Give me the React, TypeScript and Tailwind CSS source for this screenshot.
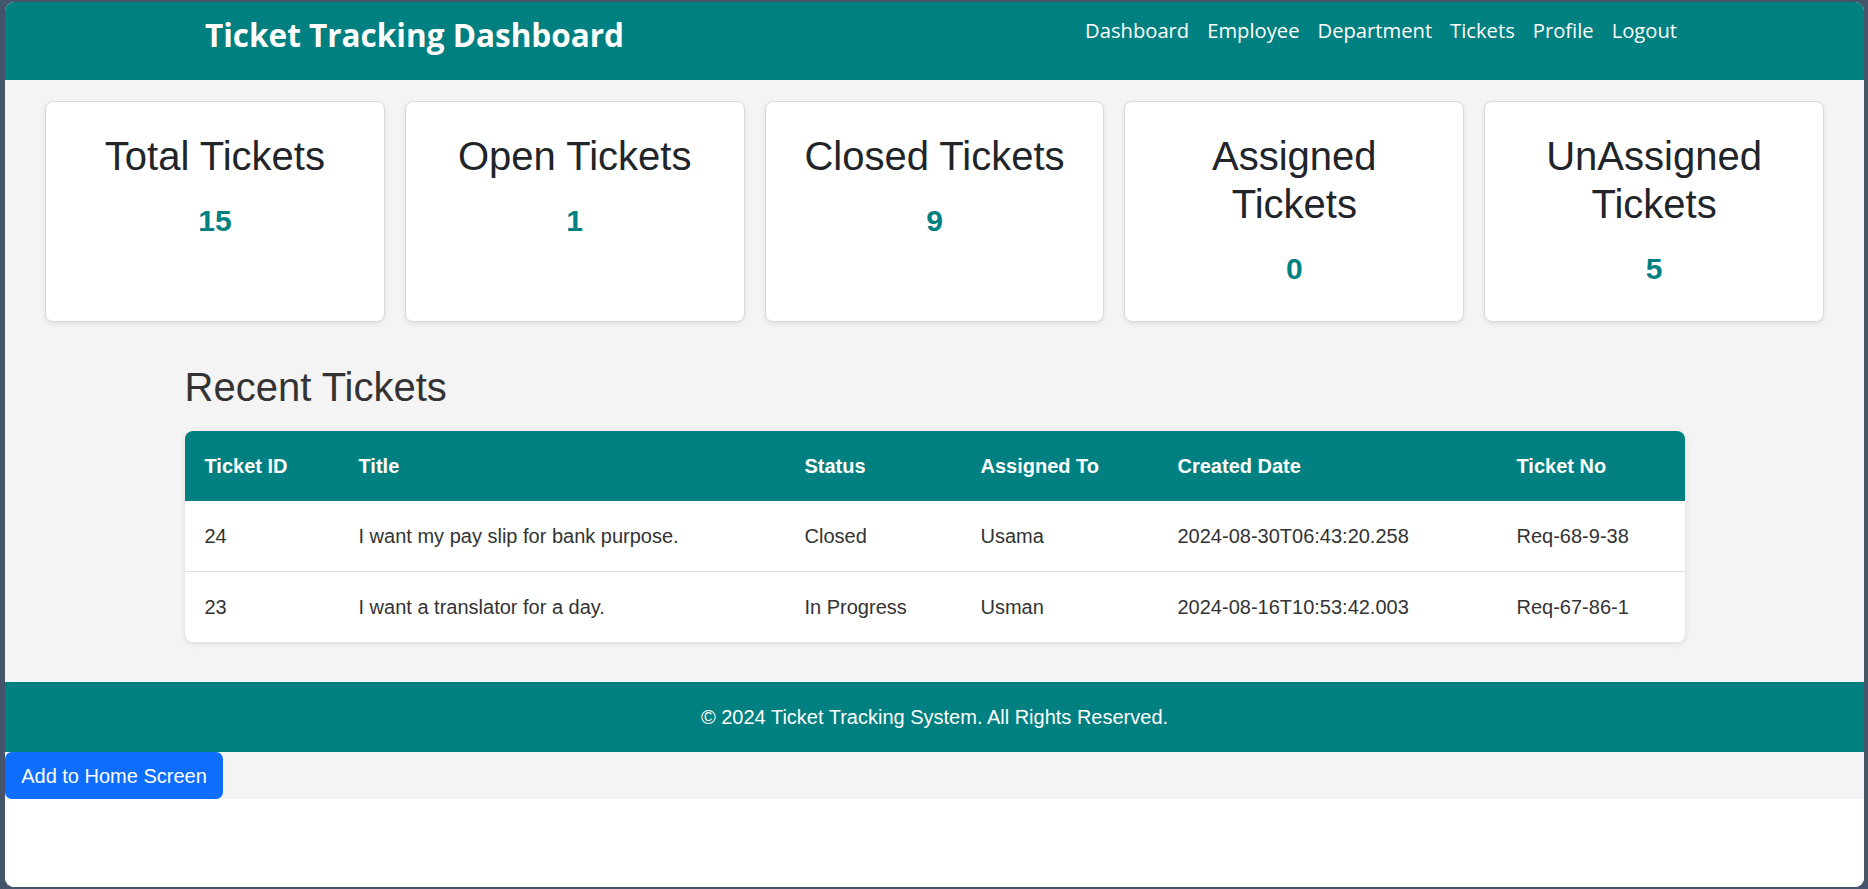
import React from "react";

const cards = [
  { title: "Total Tickets", value: "15" },
  { title: "Open Tickets", value: "1" },
  { title: "Closed Tickets", value: "9" },
  { title: "Assigned Tickets", value: "0" },
  { title: "UnAssigned Tickets", value: "5" },
];

const rows = [
  ["24", "I want my pay slip for bank purpose.", "Closed", "Usama", "2024-08-30T06:43:20.258", "Req-68-9-38"],
  ["23", "I want a translator for a day.", "In Progress", "Usman", "2024-08-16T10:53:42.003", "Req-67-86-1"],
];

const headers = ["Ticket ID", "Title", "Status", "Assigned To", "Created Date", "Ticket No"];
const widths = ["w-[154px]", "w-[446px]", "w-[176px]", "w-[197px]", "w-[339px]", "w-[188px]"];

export default function App() {
  return (
    <div className="h-[889px] w-full bg-[#44546a] pl-[5px] pt-[2px] pr-[4px] pb-[2px]">
      <div className="flex h-full flex-col overflow-hidden rounded-[9px] bg-white font-['Liberation_Sans',Arial,sans-serif]">
        <header className="flex h-[78px] shrink-0 items-start justify-between bg-[#008080] pl-[200px] pr-[187px] font-['Open_Sans',sans-serif] text-white">
          <h1 className="pt-[17px] text-[31.5px] font-bold leading-none">Ticket Tracking Dashboard</h1>
          <nav className="flex gap-[18px] pt-[18px] text-[20.2px] leading-none">
            <span>Dashboard</span>
            <span>Employee</span>
            <span>Department</span>
            <span>Tickets</span>
            <span>Profile</span>
            <span>Logout</span>
          </nav>
        </header>

        <main className="bg-[#f4f4f4] pt-[21px] pb-[40px]">
          <div className="flex gap-[20px] px-[40px]">
            {cards.map((c) => (
              <div
                key={c.title}
                className="flex flex-1 flex-col items-center rounded-[8px] border border-[#d9d9d9] bg-white pt-[30px] pb-[35px] text-center shadow-[0_2px_5px_rgba(0,0,0,0.08)]"
              >
                <h2 className="px-[30px] text-[40px] leading-[48px] text-[#212529]">{c.title}</h2>
                <div className="mt-[24px] text-[30px] font-bold leading-[34px] text-[#008080]">{c.value}</div>
              </div>
            ))}
          </div>

          <div className="mx-auto mt-[42px] w-[1500px]">
            <h2 className="text-[40px] leading-[46px] text-[#333333]">Recent Tickets</h2>
            <div className="mt-[21px] overflow-hidden rounded-[8px] bg-white shadow-[0_2px_6px_rgba(0,0,0,0.1)]">
              <table className="w-full table-fixed border-collapse text-left text-[20px]">
                <thead>
                  <tr className="h-[70px] bg-[#008080] text-white">
                    {headers.map((h, i) => (
                      <th key={h} className={`${widths[i]} pl-[20px] font-bold`}>
                        {h}
                      </th>
                    ))}
                  </tr>
                </thead>
                <tbody className="text-[#333333]">
                  <tr className="h-[70px] border-b border-[#dddddd]">
                    {rows[0].map((cell, ci) => (
                      <td key={ci} className="pl-[20px]">
                        {cell}
                      </td>
                    ))}
                  </tr>
                  <tr className="h-[71px]">
                    {rows[1].map((cell, ci) => (
                      <td key={ci} className="pl-[20px]">
                        {cell}
                      </td>
                    ))}
                  </tr>
                </tbody>
              </table>
            </div>
          </div>
        </main>

        <footer className="flex h-[70px] shrink-0 items-center justify-center bg-[#008080] text-[20px] text-white">
          © 2024 Ticket Tracking System. All Rights Reserved.
        </footer>

        <div className="bg-[#f4f4f4]">
          <button className="flex h-[47px] w-[218px] items-center justify-center rounded-[7px] bg-[#0d6efd] text-[20px] text-white">
            Add to Home Screen
          </button>
        </div>
        <div className="flex-1 bg-white" />
      </div>
    </div>
  );
}
